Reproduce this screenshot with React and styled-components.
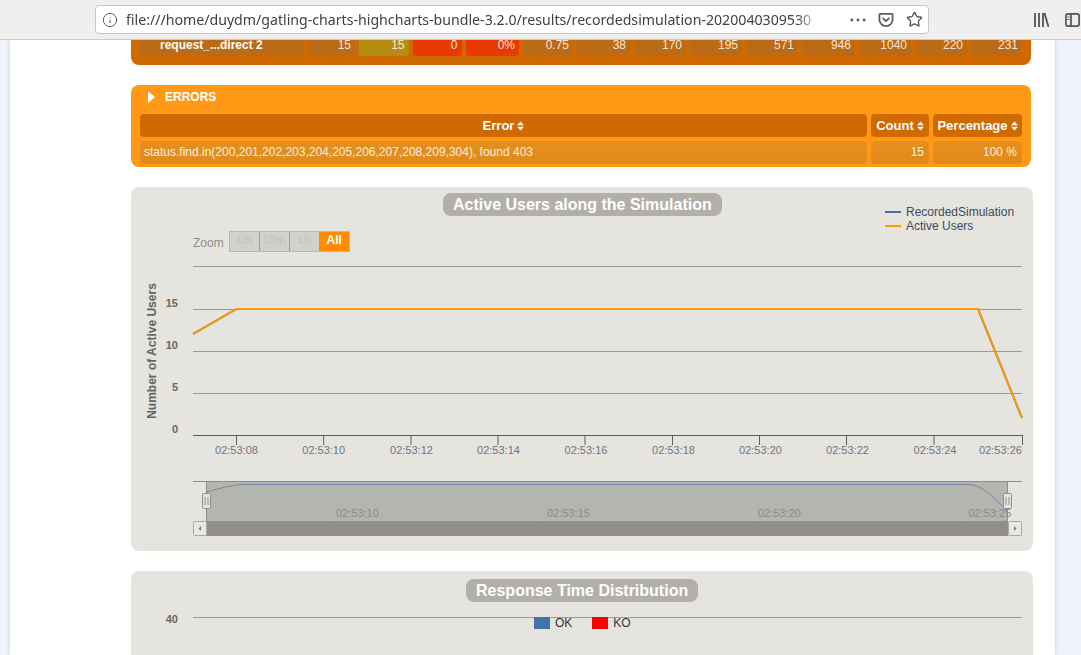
import React from "react";
import styled, { createGlobalStyle } from "styled-components";
import { Info, Star } from "lucide-react";

const Global = createGlobalStyle`
  html, body { margin: 0; padding: 0; background: #eff3fb; }
  body { font-family: "Liberation Sans", Arial, sans-serif; }
`;

const Page = styled.div`
  width: 1081px; height: 655px; overflow: hidden;
  display: flex; flex-direction: column; background: #eff3fb;
`;
const Toolbar = styled.header`
  flex: none; height: 39px; background: #f0efed; border-bottom: 1px solid #cdcccb;
  display: flex; align-items: center; padding: 0 0 0 95px; box-sizing: content-box;
  position: relative; z-index: 2;
`;
const UrlBar = styled.div`
  flex: none; width: 834px; height: 29px; box-sizing: border-box;
  background: #fff; border: 1px solid #c6c6c6; border-radius: 4px;
  display: flex; align-items: center; padding: 0 0 0 6px; color: #5b5b5d;
`;
const UrlIcon = styled(Info)`
  flex: none;
`;
const UrlText = styled.div`
  width: 695px; margin-left: 8px; flex: none; overflow: hidden; white-space: nowrap;
  font: 14.15px/27px "Noto Sans", sans-serif; color: #414146;
  -webkit-mask-image: linear-gradient(to right, #000 96.5%, transparent 100%);
  mask-image: linear-gradient(to right, #000 96.5%, transparent 100%);
`;
const UrlActions = styled.div`
  flex: none; display: flex; align-items: center; gap: 12px; margin-left: 29px; color: #5b5b5d;
`;
const ToolIcons = styled.div`
  display: flex; align-items: center; gap: 16px; margin-left: 105px; color: #545456; flex: none;
`;
const Main = styled.main`
  flex: 1; min-height: 0; display: flex; padding: 0 26px 0 10px;
`;
const Sheet = styled.div`
  flex: 1; background: #fff; box-shadow: 0 0 4px rgba(120, 130, 160, 0.35);
  padding-left: 121px; display: flex; flex-direction: column; gap: 20px;
`;
const Panel = styled.section`
  flex: none; width: 900px; box-sizing: border-box; background: ${p => p.$bg};
  border-radius: ${p => p.$flatTop ? "0 0 8px 8px" : "8px"};
  margin-top: ${p => p.$flatTop ? "-2px" : "0"};
  padding: ${p => p.$pad};
`;
const StatsGrid = styled.div`
  display: grid; gap: 4px;
  grid-template-columns: 163px 48px 49.5px 49px 53.5px 50px 53px 52px 52px 52px 53px 52px 52px 51px;
`;
const StatCell = styled.div`
  height: 18px; box-sizing: border-box; background: ${p => p.$bg || "#bb6a18"}; border-radius: 0 0 4px 4px;
  color: ${p => p.$strong ? "#fff" : "#f5e6d6"}; font: ${p => p.$strong ? "bold" : "normal"} 12px/14px "Liberation Sans", sans-serif;
  text-align: ${p => p.$strong ? "left" : "right"};
  padding: ${p => p.$strong ? "0 0 0 20px" : "0 4px 0 0"};
`;
const PanelHead = styled.div`
  display: flex; align-items: center; height: 29px; padding: 0 0 5px 8px; box-sizing: border-box;
  color: #fff; font: bold 12px "Liberation Sans", sans-serif; gap: 10px;
`;
const ErrorGrid = styled.div`
  display: grid; grid-template-columns: 727px 58px 89px; gap: 4px;
  & + & { margin-top: 4px; }
`;
const ErrorHead = styled.div`
  height: 23px; background: #cf6900; border-radius: 4px; color: #fff;
  font: bold 13px/23px "Liberation Sans", sans-serif; text-align: center;
  display: flex; align-items: center; justify-content: center; gap: 3px;
`;
const ErrorCell = styled.div`
  height: 23px; background: linear-gradient(#e4901f, #df8a1c); border-radius: 4px; color: #fbeede;
  font: 12px/23px "Liberation Sans", sans-serif; padding: 0 ${p => p.$right ? "5px" : "4px"} 0 4px; box-sizing: border-box;
  text-align: ${p => p.$right ? "right" : "left"}; white-space: nowrap;
`;
const ChartCard = styled.section`
  flex: none; width: 902px; height: ${p => p.$h}px; position: relative; background: #e5e4df; border-radius: 8px;
`;
const ChartTitle = styled.h2`
  position: absolute; top: ${p => p.$top}px; left: ${p => p.$left}px; margin: 0;
  height: 23px; padding: 0 10px; box-sizing: border-box; border-radius: 8px;
  background: #b1afa8; color: #fff; font: bold 16px/23px "Liberation Sans", sans-serif; white-space: nowrap;
`;
const LegendList = styled.div`
  position: absolute; left: 754px; top: 18px; display: flex; flex-direction: column;
`;
const LegendRow = styled.div`
  display: flex; align-items: center; gap: 5px; height: 14px;
  font: 12px/14px "Liberation Sans", sans-serif; color: #3e4a5e;
`;
const LegendLine = styled.span`
  width: 16px; height: 2px; background: ${p => p.$color};
`;
const ZoomBar = styled.div`
  position: absolute; left: 62px; top: 44px; display: flex; align-items: center; gap: 5px;
  font: 12px "Liberation Sans", sans-serif; color: #8d8c86;
`;
const ZoomLabel = styled.span`
  padding-top: 3px;
`;
const ZoomButtons = styled.div`
  display: flex; width: 121px; box-sizing: border-box; border: 1px solid #b9b8b4;
`;
const ZoomBtn = styled.span`
  flex: 0 0 ${p => p.$on ? "29px" : "30px"}; height: 19px; box-sizing: border-box; text-align: center;
  font: bold 12px/17px "Liberation Sans", sans-serif;
  background: ${p => p.$on ? "#ff8c00" : "#d1d1cf"}; color: ${p => p.$on ? "#fff" : "#c6c6c4"};
  border-right: ${p => p.$on ? "0" : "1px solid #9c9c98"};
`;
const BarLegend = styled.div`
  position: absolute; left: 403px; top: 45px; display: flex; align-items: center;
  font: 12px/14px "Liberation Sans", sans-serif; color: #333;
`;
const BarSwatch = styled.span`
  width: 16px; height: 12px; background: ${p => p.$color}; margin-right: 5px;
`;
const BarName = styled.span`
  margin-right: 20px;
`;
const ChartSvg = styled.svg`
  display: block;
`;

const Sort = () => (
  <svg width="7" height="10" viewBox="0 0 7 10"><path d="M3.500 0.500 7 4.200H0Z M0 5.800H7L3.500 9.500Z" fill="#fff" /></svg>
);
const Pocket = () => (
  <svg width="16" height="16" viewBox="0 0 17 17" fill="none" stroke="currentColor" strokeWidth="1.900">
    <path d="M2.500 2h12a1 1 0 0 1 1 1v5a7 7 0 0 1-14 0V3a1 1 0 0 1 1-1Z" />
    <path d="M5.500 6.800 8.500 9.700 11.500 6.800" strokeLinecap="round" strokeLinejoin="round" />
  </svg>
);
const Dots = () => (
  <svg width="16" height="4" viewBox="0 0 17 4" fill="currentColor"><circle cx="2" cy="2" r="1.500" /><circle cx="8.500" cy="2" r="1.500" /><circle cx="15" cy="2" r="1.500" /></svg>
);
const Library = () => (
  <svg width="15" height="14" viewBox="0 0 15 14" fill="none" stroke="currentColor" strokeWidth="1.800">
    <path d="M1 0v14M5 0v14M9 0v14M10.500 0l4 14" />
  </svg>
);
const Sidebar = () => (
  <svg width="15" height="14" viewBox="0 0 15 14" fill="none" stroke="currentColor" strokeWidth="1.700">
    <rect x="0.900" y="0.900" width="13.200" height="12.200" rx="2" />
    <path d="M6 1v12" />
    <path d="M2.500 4h2M2.500 6.500h2" strokeWidth="1.200" />
  </svg>
);

const GRID_YS = [266, 309, 351, 393];
const Y_LABELS = [["15", 307], ["10", 349], ["5", 391], ["0", 433]];
const TICKS = [
  [236.5, 236.5, "02:53:08"], [323.7, 323.7, "02:53:10"], [411, 411.5, "02:53:12"], [498, 498.5, "02:53:14"], [585, 586, "02:53:16"],
  [672.5, 673.5, "02:53:18"], [759.5, 760.5, "02:53:20"], [846.5, 847.5, "02:53:22"], [934, 935, "02:53:24"], [1022.5, 1000.5, "02:53:26"],
];
const NAV_LABELS = [[336, 333, "02:53:10"], [547, 543, "02:53:15"], [758, 754, "02:53:20"], [968.5, 965, "02:53:25"]];

const ActiveChart = () => (
  <ChartSvg width="902" height="364" viewBox="131 187 902 364" fontFamily="'Liberation Sans', sans-serif">
    {GRID_YS.map(y => <line key={y} x1="193" x2="1022" y1={y + 0.5} y2={y + 0.5} stroke="#9a9994" />)}
    <line x1="193" x2="1022" y1="435.500" y2="435.500" stroke="#5f5e5a" />
    <text transform="translate(156 351) rotate(-90)" textAnchor="middle" fontSize="12" fontWeight="bold" fill="#66645c">Number of Active Users</text>
    {Y_LABELS.map(([t, y]) => <text key={t} x="178" y={y} textAnchor="end" fontSize="11" fontWeight="bold" fill="#6d665a">{t}</text>)}
    {TICKS.map(([x, lx, t]) => (
      <React.Fragment key={t}>
        <line x1={x} x2={x} y1="435" y2="445" stroke="#5f5e5a" />
        <text x={lx} y="454" textAnchor="middle" fontSize="11" fill="#6f7480">{t}</text>
      </React.Fragment>
    ))}
    <polyline points="193,334 236.500,309 978,309 1022,418" fill="none" stroke="#4572a7" strokeWidth="2" />
    <polyline points="193,334 236.500,309 978,309 1022,418" fill="none" stroke="#ff9900" strokeWidth="2" />

    <rect x="206" y="481.500" width="802" height="39.500" fill="#b5b5af" />
    <path d="M193 481.500H1022" stroke="#8e8d87" />
    {NAV_LABELS.map(([x, l, t]) => (
      <React.Fragment key={t}>
        <line x1={l} x2={l} y1="482" y2="521" stroke="#bababe" strokeOpacity="0.6" />
        <text x={x} y="517" fontSize="11" fill="#8b8a84">{t}</text>
      </React.Fragment>
    ))}
    <path d="M206 492C222 488 232 484.500 246 484.500H966C980 484.500 988 491 1007 511" fill="none" stroke="#6f88a6" strokeWidth="1" />
    <line x1="206.500" x2="206.500" y1="482" y2="521" stroke="#8e8d87" />
    <line x1="1007.500" x2="1007.500" y1="482" y2="521" stroke="#8e8d87" />
    <rect x="206" y="521" width="802" height="15" fill="#908e87" />
    <rect x="193.500" y="521.500" width="13" height="14" rx="1" fill="#e8e8e6" stroke="#aaa9a4" />
    <rect x="1008.500" y="521.500" width="13" height="14" rx="1" fill="#e8e8e6" stroke="#aaa9a4" />
    <path d="M201 526v5l-2.500-2.500Z" fill="#777" />
    <path d="M1014 526v5l2.500-2.500Z" fill="#777" />
    {[203, 1004].map(x => (
      <g key={x}>
        <rect x={x - 0.5} y="493.500" width="8" height="15" rx="1" fill="#e5e4df" stroke="#8e8d87" />
        <path d={`M${x + 2} 497v8M${x + 5} 497v8`} stroke="#8e8d87" />
      </g>
    ))}
  </ChartSvg>
);

const DistChart = () => (
  <ChartSvg width="902" height="84" viewBox="131 571 902 84" fontFamily="'Liberation Sans', sans-serif">
    <line x1="193" x2="1022" y1="617.500" y2="617.500" stroke="#9a9994" />
    <text x="178" y="623" textAnchor="end" fontSize="11" fontWeight="bold" fill="#6d665a">40</text>
  </ChartSvg>
);

const STATS = ["15", "15", "0", "0%", "0.75", "38", "170", "195", "571", "946", "1040", "220", "231"];
const statBg = i => (i === 1 ? "#b58d12" : i === 2 || i === 3 ? "#e93a05" : undefined);

export default function App() {
  return (
    <Page>
      <Global />
      <Toolbar>
        <UrlBar>
          <UrlIcon size={16} strokeWidth={1.500} />
          <UrlText>file:///home/duydm/gatling-charts-highcharts-bundle-3.2.0/results/recordedsimulation-2020040309530</UrlText>
          <UrlActions><Dots /><Pocket /><Star size={17} strokeWidth={2} /></UrlActions>
        </UrlBar>
        <ToolIcons><Library /><Sidebar /></ToolIcons>
      </Toolbar>
      <Main>
        <Sheet>
          <Panel $bg="#cf6900" $flatTop $pad="0 9px 9px">
            <StatsGrid>
              <StatCell $strong>request_...direct 2</StatCell>
              {STATS.map((s, i) => <StatCell key={i} $bg={statBg(i)}>{s}</StatCell>)}
            </StatsGrid>
          </Panel>
          <Panel $bg="#ff9916" $pad="0 9px 3px">
            <PanelHead>
              <svg width="7" height="12" viewBox="0 0 7 12"><path d="M0 0 7 6 0 12Z" fill="#fff" /></svg>
              ERRORS
            </PanelHead>
            <ErrorGrid>
              <ErrorHead>Error <Sort /></ErrorHead>
              <ErrorHead>Count <Sort /></ErrorHead>
              <ErrorHead>Percentage <Sort /></ErrorHead>
            </ErrorGrid>
            <ErrorGrid>
              <ErrorCell>status.find.in(200,201,202,203,204,205,206,207,208,209,304), found 403</ErrorCell>
              <ErrorCell $right>15</ErrorCell>
              <ErrorCell $right>100 %</ErrorCell>
            </ErrorGrid>
          </Panel>
          <ChartCard $h={364}>
            <ActiveChart />
            <ChartTitle $top={6} $left={312}>Active Users along the Simulation</ChartTitle>
            <LegendList>
              <LegendRow><LegendLine $color="#4572a7" />RecordedSimulation</LegendRow>
              <LegendRow><LegendLine $color="#ff9900" />Active Users</LegendRow>
            </LegendList>
            <ZoomBar>
              <ZoomLabel>Zoom</ZoomLabel>
              <ZoomButtons>
                <ZoomBtn>1m</ZoomBtn><ZoomBtn>10m</ZoomBtn><ZoomBtn>1h</ZoomBtn><ZoomBtn $on>All</ZoomBtn>
              </ZoomButtons>
            </ZoomBar>
          </ChartCard>
          <ChartCard $h={120}>
            <DistChart />
            <ChartTitle $top={8} $left={335}>Response Time Distribution</ChartTitle>
            <BarLegend>
              <BarSwatch $color="#4572a7" /><BarName>OK</BarName>
              <BarSwatch $color="#ff0000" /><BarName>KO</BarName>
            </BarLegend>
          </ChartCard>
        </Sheet>
      </Main>
    </Page>
  );
}
